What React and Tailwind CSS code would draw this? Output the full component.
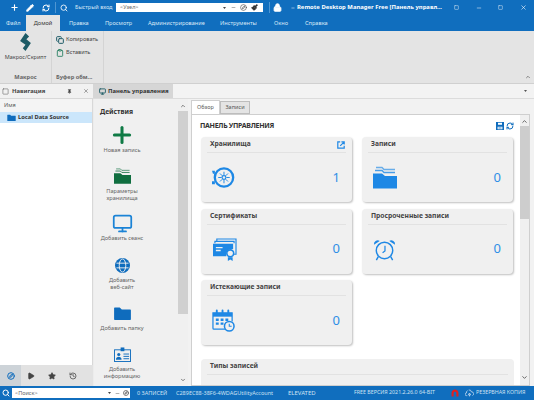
import React from "react";
import { Plus, Pencil, RefreshCw, Search, Lock, X, Minus, Square, Pin, ChevronUp, ChevronDown, Play, Star, History, Monitor, Copy, Clipboard, Compass, Paintbrush } from "lucide-react";

const Caret = ({ className }) => (
  <svg viewBox="0 0 6 4" className={className}><path d="M0 0h6L3 4z" fill="currentColor" /></svg>
);

const FolderIcon = ({ className }) => (
  <svg viewBox="0 0 24 20" className={className}><path d="M0 3a1 1 0 0 1 1-1h7l3 3h12a1 1 0 0 1 1 1v13a1 1 0 0 1-1 1H1a1 1 0 0 1-1-1z" fill="currentColor" /></svg>
);

const StackFolder = ({ className }) => (
  <svg viewBox="0 0 24 22" className={className} fill="none">
    <path d="M3 1h6l2 2h11" stroke="currentColor" strokeOpacity=".65" strokeWidth="1.4" />
    <path d="M2 4h7l2 2h11" stroke="currentColor" strokeOpacity=".8" strokeWidth="1.4" />
    <path d="M0 7h9l3 2.500h12V22H0z" fill="currentColor" />
  </svg>
);

const Floppy = () => (
  <svg viewBox="0 0 10 10" className="h-[8px] w-[8px] text-[#0f6cbd]">
    <path d="M0 0h10v10H0z" fill="currentColor" />
    <path d="M2.500 1h5v2.500h-5zM2 6h6v3H2z" fill="#fff" />
    <path d="M3 7h4M3 8h4" stroke="#0f6cbd" strokeWidth=".5" />
  </svg>
);

const OpenLink = () => (
  <svg viewBox="0 0 10 10" className="h-[8px] w-[8px] text-[#1e88e5]" fill="none" stroke="currentColor">
    <path d="M4 1H1v8h8V6" strokeWidth="1.500" />
    <path d="M5.500 1H9v3.500M9 1 4 6" strokeWidth="1.500" />
  </svg>
);

const HorseShoe = () => (
  <svg viewBox="0 0 10 10" className="h-[8px] w-[8px] text-[#e02020]" fill="none">
    <path d="M2 9.500V5a3 3 0 0 1 6 0v4.500" stroke="currentColor" strokeWidth="2.600" />
  </svg>
);

const Backup = () => (
  <svg viewBox="0 0 12 10" className="h-[8px] w-[9px] text-[#d5e6f5]" fill="none" stroke="currentColor" strokeWidth="1">
    <path d="M3 8.500H2a1.800 1.800 0 0 1 0-3.600 2.500 2.500 0 0 1 1.500-3" />
    <path d="M5 1a3 3 0 0 1 3.500 2.500h.5a2.500 2.500 0 0 1 1 4.800" />
    <path d="M4.500 7.500 6 5l1.500 2.500zM6 7.500v2" />
  </svg>
);

const Vault = () => (
  <svg viewBox="0 0 24 24" className="h-[23px] w-[23px] text-[#1e88e5]" fill="none" stroke="currentColor">
    <circle cx="12.5" cy="12" r="9.6" strokeWidth="2.4" />
    <path d="M0 5h3v3H1zM0 16h3v3H0z" fill="currentColor" stroke="none" />
    <circle cx="12.5" cy="12" r="2" strokeWidth="1.2" />
    <path d="M12.5 6v3.5M12.5 14.500V18M6.500 12H10M15 12h3.500M8.300 7.800l2.400 2.400M14.300 13.800l2.400 2.400M16.700 7.800l-2.400 2.400M10.700 13.800l-2.400 2.400" strokeWidth="1" />
  </svg>
);

const Cert = () => (
  <svg viewBox="0 0 26 24" className="h-[23px] w-[25px] text-[#1e88e5]" fill="none">
    <path d="M5 3V1h20v16h-2" stroke="currentColor" strokeWidth="1.2" />
    <path d="M3 5.500V3.500h20v2" stroke="currentColor" strokeWidth="1.2" />
    <path d="M1 6h21v5.500a6 6 0 0 0-7 7.500H1z" fill="currentColor" />
    <path d="M4 10h7M4 13h5" stroke="#f0f0f0" strokeWidth="1.4" />
    <circle cx="19" cy="16" r="3.600" stroke="currentColor" strokeWidth="1.600" />
    <path d="M16.500 20v4l2.500-1.500 2.500 1.500v-4" fill="currentColor" />
  </svg>
);

const Calendar = () => (
  <svg viewBox="0 0 24 24" className="h-[23px] w-[23px] text-[#1e88e5]" fill="none">
    <path d="M14 21H2a1 1 0 0 1-1-1V4h20v9" stroke="currentColor" strokeWidth="1.300" />
    <path d="M1 4h20v4H1z" fill="currentColor" />
    <path d="M5 1.500v4M11 1.500v4M17 1.500v4" stroke="currentColor" strokeWidth="2" strokeLinecap="round" />
    <path d="M4 10h3v2.500H4zM9 10h3v2.500H9zM14 10h3v2.500h-3zM4 14h3v2.500H4zM9 14h3v2.500H9z" fill="currentColor" />
    <circle cx="18" cy="18" r="5" fill="#f0f0f0" stroke="currentColor" strokeWidth="1.600" />
    <path d="M18 15.500V18h2.500" stroke="currentColor" strokeWidth="1.100" />
  </svg>
);

const Alarm = () => (
  <svg viewBox="0 0 24 24" className="h-[23px] w-[23px] text-[#1e88e5]" fill="none">
    <circle cx="12" cy="13" r="8.600" stroke="currentColor" strokeWidth="1.500" />
    <path d="M1 7a4 4 0 0 1 6-4zM23 7a4 4 0 0 0-6-4z" fill="currentColor" />
    <path d="M12.500 8v5.500L10 15.500" stroke="currentColor" strokeWidth="1.300" />
    <path d="M5.500 19.500 3.500 23M18.500 19.500l2 3.500" stroke="currentColor" strokeWidth="1.500" />
  </svg>
);

const Globe = () => (
  <svg viewBox="0 0 16 16" className="h-[15px] w-[15px] text-[#0f6cbd]">
    <circle cx="8" cy="8" r="8" fill="currentColor" />
    <ellipse cx="8" cy="8" rx="3.500" ry="7" fill="none" stroke="#f0f0f0" strokeWidth="1" />
    <path d="M1.500 5.500h13M1.500 10.500h13" stroke="#f0f0f0" strokeWidth="1" />
  </svg>
);

const IdCard = () => (
  <svg viewBox="0 0 18 16" className="h-[15px] w-[17px] text-[#0f6cbd]">
    <rect x="0.500" y="3" width="17" height="12.500" fill="#f0f0f0" stroke="currentColor" strokeWidth="1" />
    <rect x="7" y="0.500" width="4" height="4" fill="currentColor" />
    <circle cx="5" cy="8" r="1.700" fill="currentColor" />
    <path d="M2 13.500c0-4 6-4 6 0z" fill="currentColor" />
    <path d="M10 7.500h6M10 10h6M10 12.500h6" stroke="currentColor" strokeWidth="1" />
  </svg>
);

const MacroIcon = () => (
  <svg viewBox="0 0 14 20" className="h-[18px] w-[13px] text-[#1d5b66]">
    <path d="M7 0l4 4-3 3 5 4-6 9-3-3 3-4-6-4z" fill="currentColor" />
  </svg>
);

const Card = ({ title, value, icon, link }) => (
  <div className="h-[65px] rounded-sm bg-[#f0f0f0] px-[6px] shadow-[1px_1px_2px_rgba(0,0,0,0.25)]">
    <div className="flex h-[16px] items-center justify-between border-b border-[#e2e2e2] pl-[3px] pr-[1px] text-[6.700px] font-bold text-[#444]">
      <span>{title}</span>
      {link && <OpenLink />}
    </div>
    <div className="flex h-[49px] items-center justify-between pl-[5px] pr-[6px]">
      {icon}
      <span className="text-[13px] text-[#2e8fe6]">{value}</span>
    </div>
  </div>
);

const Action = ({ icon, label, h }) => (
  <div className={`flex w-[56px] flex-col items-center ${h}`}>
    <div className="flex h-[20px] items-center justify-center">{icon}</div>
    <div className="mt-[2px] w-[56px] text-center text-[5.600px] leading-[7px] whitespace-nowrap text-[#666]">{label}</div>
  </div>
);

export default function App() {
  return (
    <div className="flex h-[400px] w-[534px] flex-col overflow-hidden bg-white text-[6px] text-[#333] [font-family:'Noto_Sans','Open_Sans',sans-serif]">
      {/* Title bar */}
      <div className="flex h-[15px] items-center bg-[#106ebe] text-white">
        <Plus className="ml-[10px] h-[9px] w-[9px]" strokeWidth={3} />
        <Pencil className="ml-[7px] h-[8px] w-[8px]" strokeWidth={3} fill="white" />
        <RefreshCw className="ml-[8px] h-[8px] w-[8px]" strokeWidth={3} />
        <div className="ml-[5px] h-[11px] w-px bg-[#4f96d2]" />
        <Search className="ml-[4px] h-[8px] w-[8px]" strokeWidth={2.500} />
        <span className="ml-[7px] w-[41px] text-[5.500px] whitespace-nowrap text-[#d5e6f5]">Быстрый вход</span>
        <div className="flex h-[9px] w-[147px] items-center bg-white pl-[4px] text-[5.500px] text-[#666]">
          <span className="w-[103px]">&lt;Узел&gt;</span>
          <Caret className="h-[2px] w-[3px] text-[#444]" />
          <Minus className="ml-[5px] h-[5px] w-[5px] text-[#444]" />
          <Compass className="ml-[4px] h-[7px] w-[7px] text-[#444]" />
          <Paintbrush className="ml-[4px] h-[7px] w-[7px] text-[#333]" fill="#333" />
        </div>
        <div className="ml-[6px] h-[11px] w-px bg-[#4f96d2]" />
        <Lock className="ml-[3px] h-[9px] w-[9px]" strokeWidth={2.500} fill="white" />
        <Minus className="ml-[9px] h-[4px] w-[4px]" strokeWidth={3} />
        <span className="ml-[2px] w-[157px] text-[5.900px] font-bold whitespace-nowrap">Remote Desktop Manager Free [Панель управл...</span>
        <Square className="h-[5px] w-[5px] text-[#d5e6f5]" strokeWidth={2.500} />
        <Minus className="ml-[17px] h-[6px] w-[6px]" />
        <Square className="ml-[16px] h-[5px] w-[5px]" strokeWidth={2} />
        <X className="ml-[17px] h-[7px] w-[7px]" strokeWidth={2} />
      </div>
      {/* Menu tabs */}
      <div className="flex h-[16px] items-center bg-[#106ebe] text-[5.600px] text-[#d9e9f7]">
        <span className="ml-[6px] w-[20px]">Файл</span>
        <div className="flex h-[16px] w-[34px] items-center justify-center bg-[#e4e4e4] text-[#333]">Домой</div>
        <span className="ml-[9px] w-[36px]">Правка</span>
        <span className="w-[43px]">Просмотр</span>
        <span className="w-[72px]">Администрирование</span>
        <span className="w-[54px]">Инструменты</span>
        <span className="w-[31px]">Окно</span>
        <span>Справка</span>
      </div>
      {/* Ribbon */}
      <div className="flex h-[53px] items-stretch border-b border-[#d0d0d0] bg-[#e4e4e4] text-[#444]">
        <div className="flex w-[52px] flex-col items-center border-r border-[#d4d4d4] pt-[2px]">
          <MacroIcon />
          <span className="mt-[2px] text-[5.500px]">Макрос/Скрипт</span>
          <span className="mt-auto mb-[1px] text-[5.700px] font-bold text-[#666]">Макрос</span>
        </div>
        <div className="flex w-[52px] flex-col border-r border-[#d4d4d4] pt-[2px] pl-[4px]">
          <div className="flex h-[13px] items-center gap-[2px] text-[5.600px]"><Copy className="h-[8px] w-[8px] text-[#1d5b66]" strokeWidth={3} />Копировать</div>
          <div className="flex h-[13px] items-center gap-[2px] text-[5.600px]"><Clipboard className="h-[8px] w-[8px] text-[#1d7a5a]" strokeWidth={2.500} />Вставить</div>
          <span className="mt-auto mb-[1px] text-[5.700px] font-bold whitespace-nowrap text-[#666]">Буфер обм...</span>
        </div>
        <div className="flex flex-1 items-end justify-end pr-[3px] pb-[3px]">
          <ChevronUp className="h-[6px] w-[6px] text-[#666]" strokeWidth={3} />
        </div>
      </div>
      {/* Body */}
      <div className="flex min-h-0 flex-1 bg-[#ececec]">
        {/* Navigation */}
        <div className="flex w-[93px] flex-col">
          <div className="flex h-[14px] items-center bg-[#f1f1f1]">
            <Square className="ml-[2px] h-[7px] w-[7px] text-[#666]" />
            <span className="ml-[3px] w-[55px] text-[5.900px] font-bold text-[#444]">Навигация</span>
            <Pin className="h-[5px] w-[5px] text-[#444]" fill="#444" />
            <X className="ml-[11px] h-[6px] w-[6px] text-[#555]" />
          </div>
          <div className="flex flex-1 flex-col border-t border-r border-[#d8d8d8] bg-white">
            <div className="flex h-[13px] items-center bg-[#f4f4f4] pl-[4px] text-[5.500px] text-[#555]">Имя</div>
            <div className="flex h-[11px] items-center bg-[#cbe6fb] pl-[7px] text-[#333]">
              <FolderIcon className="h-[7px] w-[9px] text-[#0f6cbd]" />
              <span className="ml-[2px] text-[5.750px] font-bold">Local Data Source</span>
            </div>
            <div className="flex-1" />
          </div>
          <div className="flex h-[21px] items-center bg-[#e2e2e2]">
            <div className="flex h-full w-[21px] items-center justify-center bg-[#cdd3d8]">
              <Compass className="h-[8px] w-[8px] text-[#0f6cbd]" strokeWidth={3} />
            </div>
            <Play className="ml-[6px] h-[8px] w-[8px] text-[#444]" fill="#444" />
            <Star className="ml-[13px] h-[8px] w-[8px] text-[#444]" fill="#444" />
            <History className="ml-[13px] h-[8px] w-[8px] text-[#555]" strokeWidth={2.500} />
          </div>
        </div>
        {/* Document */}
        <div className="flex min-w-0 flex-1 flex-col">
          <div className="flex h-[14px] items-center bg-[#f3f3f3]">
            <div className="flex h-full w-[80px] items-center bg-[#d6d6d6] pl-[6px]">
              <Monitor className="h-[7px] w-[7px] text-[#1d5b66]" strokeWidth={3} />
              <span className="ml-[2px] text-[5.900px] font-bold whitespace-nowrap text-[#333]">Панель управления</span>
            </div>
            <div className="flex-1" />
            <Caret className="mr-[7px] h-[2px] w-[3px] text-[#555]" />
          </div>
          <div className="flex min-h-0 flex-1 border-t border-[#dcdcdc]">
            {/* Actions */}
            <div className="ml-px flex w-[94px] bg-[#f0f0f0]">
              <div className="w-[84px] overflow-hidden">
                <div className="flex h-[26px] items-center pl-[6px] text-[6.700px] font-bold text-[#333]">Действия</div>
                <Action h="h-[41px]" icon={<Plus className="h-[26px] w-[26px] text-[#0f7a45]" strokeWidth={2.800} />} label="Новая запись" />
                <Action h="h-[47px]" icon={<StackFolder className="h-[16px] w-[17px] text-[#0f6e3f]" />} label={<>Параметры<br />хранилища</>} />
                <Action h="h-[42px]" icon={<Monitor className="h-[21px] w-[21px] text-[#1b83d6]" strokeWidth={2} />} label="Добавить сеанс" />
                <Action h="h-[48px]" icon={<Globe />} label={<>Добавить<br />веб-сайт</>} />
                <Action h="h-[41px]" icon={<FolderIcon className="h-[14px] w-[17px] text-[#0f6cbd]" />} label="Добавить папку" />
                <Action h="h-[41px]" icon={<IdCard />} label={<>Добавить<br />информацию</>} />
              </div>
              <div className="flex w-[10px] flex-col items-center">
                <ChevronUp className="mt-[4px] h-[6px] w-[6px] text-[#555]" strokeWidth={3} />
                <div className="mt-[2px] h-[203px] w-full bg-[#d0d0d0]" />
                <div className="flex-1" />
                <ChevronDown className="mb-[3px] h-[6px] w-[6px] text-[#555]" strokeWidth={3} />
              </div>
            </div>
            {/* Content */}
            <div className="flex min-w-0 flex-1 flex-col bg-[#f2f2f2] pt-px pr-[4px] pl-[3px]">
              <div className="flex h-[14px] items-end text-[5.500px] text-[#555]">
                <div className="flex h-[14px] w-[29px] items-center justify-center border border-b-0 border-[#cfcfcf] bg-white">Обзор</div>
                <div className="flex h-[13px] w-[30px] items-center justify-center border border-[#bdbdbd] bg-[#e4e4e4]">Записи</div>
              </div>
              <div className="flex min-h-0 flex-1 border border-[#cfcfcf] bg-white">
                <div className="min-w-0 flex-1 overflow-hidden pr-[6px] pl-[8px]">
                  <div className="flex h-[22px] items-center justify-between">
                    <span className="text-[7px] font-bold tracking-[-0.3px] text-[#333]">ПАНЕЛЬ УПРАВЛЕНИЯ</span>
                    <div className="flex items-center gap-[2px] text-[#0f6cbd]">
                      <Floppy />
                      <RefreshCw className="h-[8px] w-[8px]" strokeWidth={3} />
                    </div>
                  </div>
                  <div className="ml-px grid grid-cols-[151px_151px] gap-x-[10px] gap-y-[6.500px]">
                    <Card title="Хранилища" value="1" icon={<Vault />} link />
                    <Card title="Записи" value="0" icon={<StackFolder className="h-[23px] w-[24px] text-[#1e88e5]" />} />
                    <Card title="Сертификаты" value="0" icon={<Cert />} />
                    <Card title="Просроченные записи" value="0" icon={<Alarm />} />
                    <Card title="Истекающие записи" value="0" icon={<Calendar />} />
                  </div>
                  <div className="mt-[14px] ml-px h-[40px] rounded-sm bg-[#f0f0f0] px-[6px]">
                    <div className="flex h-[16px] items-center border-b border-[#e2e2e2] pl-[3px] text-[6.700px] font-bold text-[#444]">Типы записей</div>
                  </div>
                </div>
                <div className="flex w-[9px] flex-col items-center bg-[#f0f0f0]">
                  <ChevronUp className="mt-[3px] h-[7px] w-[7px] text-[#555]" strokeWidth={3} />
                  <div className="mt-[1px] h-[93px] w-full bg-[#cdcdcd]" />
                  <div className="flex-1" />
                  <ChevronDown className="mb-[4px] h-[7px] w-[7px] text-[#555]" strokeWidth={3} />
                </div>
              </div>
            </div>
          </div>
        </div>
      </div>
      {/* Status bar */}
      <div className="flex h-[14px] items-center bg-[#106ebe] text-[5.500px] whitespace-nowrap text-[#cfe2f3]">
        <Search className="ml-[2px] h-[8px] w-[8px] text-white" strokeWidth={3} />
        <div className="ml-[2px] flex h-[10px] w-[118px] items-center bg-white pl-[3px] text-[#666]">
          <span className="w-[93px]">&lt;Поиск&gt;</span>
          <Caret className="h-[2px] w-[3px] text-[#444]" />
          <Minus className="ml-[4px] h-[5px] w-[5px] text-[#444]" />
          <Compass className="ml-[3px] h-[6px] w-[6px] text-[#555]" strokeWidth={3} />
        </div>
        <span className="ml-[7px] w-[39px]">0 ЗАПИСЕЙ</span>
        <span className="w-[112px] overflow-hidden">C289EC88-38F6-4WDAGUtilityAccount</span>
        <span className="w-[66px] text-[6px]">ELEVATED</span>
        <span className="w-[97px] text-[5.300px]">FREE ВЕРСИЯ 2021.2.26.0 64-BIT</span>
        <HorseShoe />
        <div className="ml-[6px]"><Backup /></div>
        <span className="ml-[2px] text-[5.300px]">РЕЗЕРВНАЯ КОПИЯ</span>
      </div>
    </div>
  );
}
